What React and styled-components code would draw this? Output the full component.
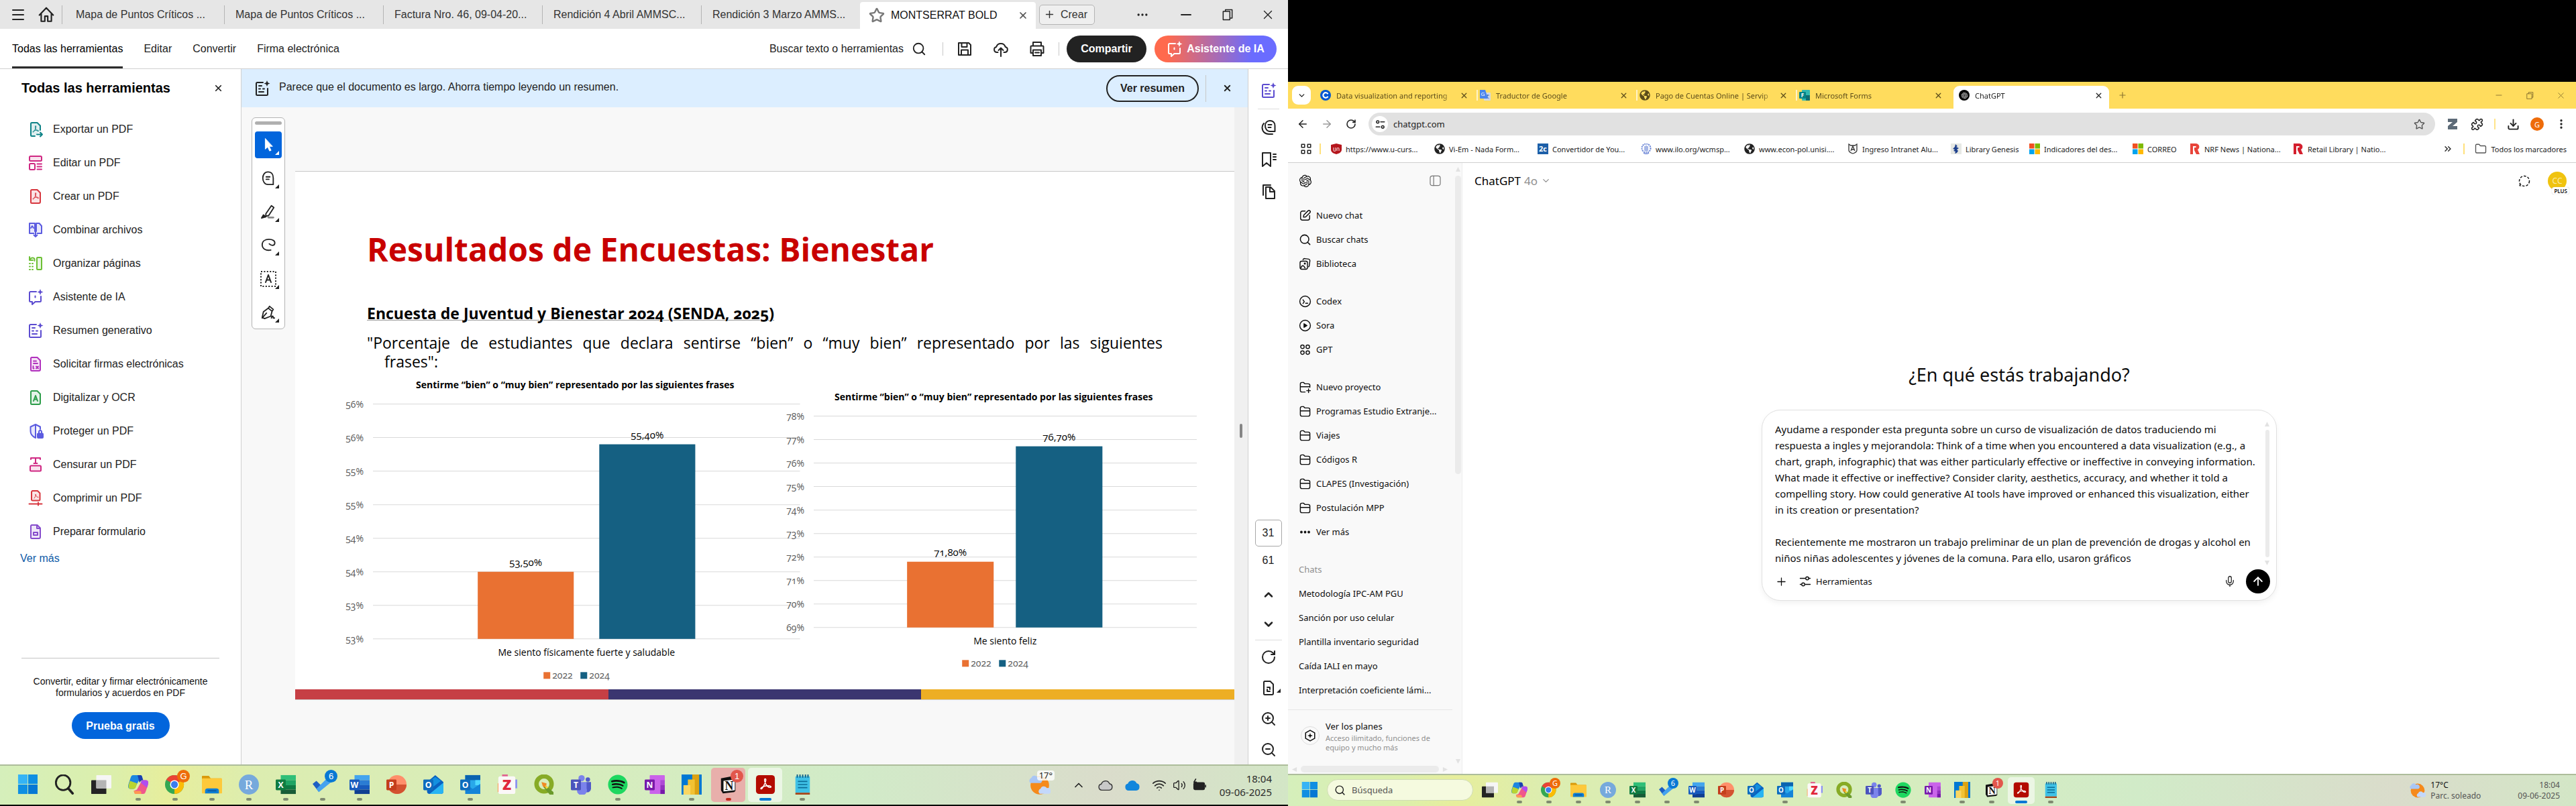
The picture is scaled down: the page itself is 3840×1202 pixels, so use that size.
import React from "react";
import styled, { createGlobalStyle, css } from "styled-components";
import {
  ArrowLeft, ArrowRight, ArrowUp, ChevronDown, ChevronUp, ChevronsRight, Copy, Download,
  Ellipsis, EllipsisVertical, Folder, Menu, Mic, Minus, Plus, Puzzle, RotateCw, Search,
  Star, Volume2, Wifi, X, ZoomIn, ZoomOut,
} from "lucide-react";
import { RiOpenaiFill } from "react-icons/ri";
import { FaSpotify, FaGlobeAmericas } from "react-icons/fa";

/* ---------- base ---------- */

const arial = `"Liberation Sans", Arial, sans-serif`;
const segoe = `"Noto Sans", "Segoe UI", sans-serif`;
const corbel = `"Open Sans", Corbel, sans-serif`;

const GlobalStyle = createGlobalStyle`
  *, *::before, *::after { box-sizing: border-box; }
  body { margin: 0; background: #000; }
  button, input, textarea { font: inherit; color: inherit; margin: 0; padding: 0; border: 0; background: none; outline: 0; }
  a { color: inherit; text-decoration: none; }
  ul { list-style: none; margin: 0; padding: 0; }
  h1, h2, p { margin: 0; font: inherit; }
  svg { display: block; flex: none; }
`;

const Desktop = styled.div`
  display: grid;
  grid-template-columns: 1fr 1fr;
  min-height: 100vh;
`;

const Monitor = styled.section`
  display: flex;
  flex-direction: column;
  min-width: 0;
  padding: ${(p) => p.$inset};
  font-family: ${(p) => p.$font};
`;

const Spacer = styled.div`
  flex: 1;
`;

const Rule = styled.span`
  flex: none;
  width: ${(p) => p.$w || 1}px;
  height: ${(p) => p.$h}px;
  margin: ${(p) => p.$m || "0"};
  background: ${(p) => p.$c || "#c8c8c8"};
`;

const IconButton = styled.button`
  position: relative;
  display: flex;
  align-items: center;
  justify-content: center;
  flex: none;
  width: ${(p) => p.$w || 40}px;
  height: ${(p) => p.$h || p.$w || 40}px;
  border-radius: 4px;
  color: ${(p) => p.$color || "#222"};
  background: ${(p) => p.$bg || "transparent"};
`;

/* ---------- drawn icons ---------- */

const Glyph = ({ size = 24, color = "currentColor", sw = 2, fill = "none", children }) => (
  <svg width={size} height={size} viewBox="0 0 24 24" fill={fill} stroke={color} strokeWidth={sw} strokeLinecap="round" strokeLinejoin="round">
    {children}
  </svg>
);

const trefoil = "M12 7c-.9 0-.8 2 .2 4.200 1 2.200 2.900 3.800 4 3.600 1.200-.4.2-1.700-2.200-1.700-2.300 0-4.300.8-5.500 1.800-1.100 1-.2 1.900.8.6C10.900 13.500 13 8.500 12.700 7.500c-.1-.3-.3-.5-.7-.5z";
const page = "M6 2h8.500L19 6.500V20a2 2 0 0 1-2 2H6.500A1.500 1.500 0 0 1 5 20.500v-17A1.500 1.500 0 0 1 6.500 2z";
const spark = "M19 0l1.300 3.200L23.500 4.500l-3.200 1.300L19 9l-1.300-3.200L14.500 4.500l3.200-1.300z";

const SummaryIcon = ({ size = 24, color }) => (
  <Glyph size={size} color={color}>
    <path d="M13 3H4.500A1.500 1.500 0 0 0 3 4.500v16A1.500 1.500 0 0 0 4.500 22h14a1.500 1.500 0 0 0 1.500-1.500V12M7 8h4M7 12.500h2M13 12.500h2M7 17h7" />
    <path d={spark} fill={color || "currentColor"} stroke="none" />
  </Glyph>
);
const AssistantIcon = ({ size = 24, color }) => (
  <Glyph size={size} color={color}>
    <path d="M13 4H4.500A1.500 1.500 0 0 0 3 5.500v12A1.500 1.500 0 0 0 4.500 19H7v4l4.500-4h7a1.500 1.500 0 0 0 1.500-1.500V11M11.500 10.500v2" />
    <path d={spark} fill={color || "currentColor"} stroke="none" />
  </Glyph>
);
const CommentsIcon = () => (
  <Glyph>
    <path d="M14 2C9.500 2 7 5.500 7 9.500S9.500 18 14 18h7.500V9.500C21.500 5 18.500 2 14 2zM11.500 8h5M11.500 12h4" />
    <path d="M5 6C3 8 2.500 10 2.500 12c0 6 4 10 10 10H18" />
  </Glyph>
);
const HomeIcon = () => (
  <Glyph size={26}><path d="M2.500 12.500L12 2.500l9.500 10M5 10.500V21h5v-7h4v7h5V10.500" /></Glyph>
);
const SaveIcon = () => (
  <Glyph><path d="M3 3h15l3 3v15H3zM7.500 3v6h8V3M7 21v-7.500h10V21" /></Glyph>
);
const UploadIcon = () => (
  <Glyph><path d="M7.500 17H6a4 4 0 0 1-.8-7.900 7 7 0 0 1 13.500 0A4 4 0 0 1 18 17h-1.500M12 23V11M8.500 14l3.500-3.500 3.500 3.500" /></Glyph>
);
const PrintIcon = () => (
  <Glyph><path d="M6 7V2h12v5M6 18H2.500V8.500a1 1 0 0 1 1-1h17a1 1 0 0 1 1 1V18H18M6 13.500h12V22H6zM9 17.500h6" /></Glyph>
);

const toolIcons = {
  exportar: (c) => <Glyph color={c}><path d="M19 13V6.500L14.500 2h-8A1.500 1.500 0 0 0 5 3.500v17A1.500 1.500 0 0 0 6.500 22H11" fill={c + "22"} /><path d={trefoil} strokeWidth="1" /><path d="M14 19.500h8M19 16.500l3 3-3 3" /></Glyph>,
  editar: (c) => <Glyph color={c}><rect x="3" y="2" width="18" height="7" rx="1.500" fill={c + "22"} /><rect x="3" y="13" width="8" height="9" rx="1.500" /><path d="M14.500 13.500H21M14.500 17.500H21M14.500 21.500H21" /></Glyph>,
  crear: (c) => <Glyph color={c}><path d={page} fill={c + "22"} /><path d={trefoil} strokeWidth="1" /></Glyph>,
  combinar: (c) => <Glyph color={c}><path d="M9.500 17H3V2h8v12M14.500 17H21V6l-3.500-4H13v12" fill={c + "22"} /><path d="M12 12v10M9.500 19.500L12 22l2.500-2.500M5 9l2-3 2 3" /></Glyph>,
  organizar: (c) => <Glyph color={c}><rect x="14" y="3" width="7" height="18" rx="1" fill={c + "22"} /><path d="M3 2v5h5M3.500 6C5 3 9 2.500 10.500 5v3" /><path d="M3 12h8M3 16.500h8M3 21h8" strokeDasharray="1 3" /></Glyph>,
  asistente: (c) => <AssistantIcon color={c} />,
  resumen: (c) => <SummaryIcon color={c} />,
  firmas: (c) => <Glyph color={c}><path d={page} fill={c + "22"} /><path d="M9 7.500h4M9 11h6M8.500 15v3M8.500 18.500h1M13 15.500l3 3M16 15.500l-3 3" /></Glyph>,
  ocr: (c) => <Glyph color={c}><path d={page} fill={c + "22"} /><path d="M9 17l3-8 3 8M10 14.500h4" /></Glyph>,
  proteger: (c) => <Glyph color={c}><path d="M19 9V5.500L12 2 4.500 5.500V12c0 5 3 8 7.500 10V2" fill={c + "22"} /><rect x="15" y="15.500" width="8" height="6.500" rx="1" fill={c} /><path d="M17 15v-2a2 2 0 0 1 4 0v2" /></Glyph>,
  censurar: (c) => <Glyph color={c}><path d="M5 4V2h14v2M12 2v8M9.500 10h5" /><rect x="4" y="13.500" width="16" height="8" rx="1.500" fill={c + "22"} /></Glyph>,
  comprimir: (c) => <Glyph color={c}><path d="M7 1h8l3.500 3.500V14a1.500 1.500 0 0 1-1.500 1.500H7.500A1.500 1.500 0 0 1 6 14V2.500z" fill={c + "22"} /><path d="M10 12c1.500-1.500 2.500-4 2-6 .5 3 2 4.500 4 4.500" strokeWidth="1" /><path d="M2.500 20.500h19M16 18.500v4" /></Glyph>,
  formulario: (c) => <Glyph color={c}><path d={page} fill={c + "22"} /><rect x="9" y="13" width="6" height="4" /><path d="M14 3v4h4" /></Glyph>,
};

/* ---------- taskbar icons ---------- */

const App32 = ({ size, children }) => (
  <svg width={size} height={size} viewBox="0 0 32 32">{children}</svg>
);
const Tile = ({ c, t }) => (
  <g>
    <rect x="0" y="8" width="16" height="17" rx="1.500" fill={c} />
    <text x="8" y="21.500" fill="#fff" fontFamily="Open Sans, sans-serif" fontSize="13" fontWeight="700" textAnchor="middle">{t}</text>
  </g>
);
const bars = (a, b, c, d) => (
  <g>
    <rect x="8" y="1" width="24" height="8" fill={a} /><rect x="8" y="9" width="24" height="8" fill={b} />
    <rect x="8" y="17" width="24" height="7" fill={c} /><rect x="8" y="24" width="24" height="7" fill={d} />
  </g>
);
const appIcons = {
  windows: <g fill="#0f8fe2"><rect x="1" y="0" width="15" height="15" fill="#35b4f5" /><rect x="17" y="0" width="15" height="15" /><rect x="1" y="16" width="15" height="15" /><rect x="17" y="16" width="15" height="15" fill="#0678d4" /></g>,
  search: <g fill="none" stroke="#222" strokeWidth="3" strokeLinecap="round"><ellipse cx="14" cy="13" rx="11.500" ry="12" /><path d="M22 22l7 8" strokeWidth="4" /></g>,
  tasks: <g><rect x="0" y="9" width="24" height="22" rx="1" fill="#242424" /><rect x="8" y="1" width="24" height="21" rx="1" fill="#f6f6f6" /><rect x="8" y="9" width="16" height="13" fill="#b4b4b4" /></g>,
  copilot: <g><path d="M8 1h11c3 0 3 2 4 5l-5 2-6 11c-1 3-2 4-4 4H4c-4 0-5-3-3-9L4 5c1-3 2-4 4-4z" fill="#1c86e0" /><path d="M3 10l-2 6c-1 5 0 7 4 7h4c2 0 3-2 4-5l1-4z" fill="#b9d531" /><path d="M24 31H13c-3 0-3-2-4-5l5-2 6-11c1-3 2-4 4-4h4c4 0 5 3 3 9l-3 9c-1 3-2 4-4 4z" fill="#f0588c" /><path d="M20 13c1-3 2-4 4-4h4c4 0 5 3 3 9l-1 3z" fill="#b04df0" /><path d="M13 31c-3 0-3-2-4-5h10c2 0 3 5 1 5z" fill="#ff9a52" /><path d="M15 1h4c3 0 3 2 4 5l1 3c-4 0-4 2-6 4z" fill="#1b3fb0" /></g>,
  chrome: <g><circle cx="15" cy="16" r="15" fill="#34a853" /><path d="M15 16L2 8.500A15 15 0 0 1 28 8.500z" fill="#ea4335" /><path d="M15 16l13-7.500A15 15 0 0 1 15 31z" fill="#fbbc05" /><circle cx="15" cy="16" r="7" fill="#fff" /><circle cx="15" cy="16" r="5.500" fill="#3b7ded" /></g>,
  folder: <g><path d="M0 3a1 1 0 0 1 1-1h10l3 4h17v4H0z" fill="#d99a0b" /><rect x="0" y="6" width="32" height="24" rx="1" fill="#fdc93b" /><path d="M5 30v-4a4 4 0 0 1 4-4h14a4 4 0 0 1 4 4v4z" fill="#0f7fd4" /><path d="M9 26h14" stroke="#0a4f94" strokeWidth="1.500" /></g>,
  r: <g><circle cx="16" cy="16" r="16" fill="#76a9dc" /><text x="16" y="23" fill="#fff" fontFamily="Liberation Serif, serif" fontSize="20" textAnchor="middle">R</text></g>,
  excel: <g>{bars("#2fbf78", "#1fa463", "#0f7a43", "#185c37")}<Tile c="#107c41" t="X" /></g>,
  todo: <g><path d="M0 15l6-5 9 9-5 9z" fill="#1d5fc4" /><path d="M10 28l-4-5L25 4l7 6z" fill="#45a2ee" /></g>,
  word: <g>{bars("#43a5ee", "#2b7cd3", "#185abd", "#103f91")}<Tile c="#185abd" t="W" /></g>,
  ppt: <g><circle cx="17" cy="16" r="15" fill="#ff8f6b" /><path d="M2 16h30a15 15 0 0 1-30 0z" fill="#d35230" /><Tile c="#c43e1c" t="P" /></g>,
  outlookNew: <g><path d="M6 12L19 1l13 11v15a4 4 0 0 1-4 4H10a4 4 0 0 1-4-4z" fill="#0a62c0" /><path d="M6 13l13-9 9 6-18 14z" fill="#1490df" /><path d="M32 13v14a4 4 0 0 1-4 4H10z" fill="#28b4f2" /><Tile c="#0f6cbd" t="O" /></g>,
  outlook: <g><rect x="8" y="1" width="24" height="24" fill="#28a8ea" /><rect x="8" y="1" width="24" height="8" fill="#0a63b0" /><rect x="24" y="9" width="8" height="8" fill="#50d9ff" /><path d="M8 15l12 8 12-8v16H8z" fill="#1484d8" /><Tile c="#0f6cbd" t="O" /></g>,
  zotero: <g><rect x="8" y="0" width="9" height="5" fill="#e0638f" /><rect x="1" y="14" width="8" height="14" fill="#ff9248" /><rect x="24" y="8" width="8" height="14" fill="#8b93f0" /><rect x="2" y="3" width="27" height="28" rx="3" fill="#fbf8f8" /><text x="15.500" y="25" fill="#e0283c" fontFamily="Open Sans, sans-serif" fontSize="23" fontWeight="800" textAnchor="middle">Z</text></g>,
  qgis: <g><circle cx="16" cy="15" r="12" fill="none" stroke="#87ab26" strokeWidth="7" /><path d="M17 16l14 12v4h-6L15 20z" fill="#6b9a2c" /><path d="M12 12l8 2-1 7-5-2z" fill="#f08a24" /><path d="M18 17l5 4-4 2z" fill="#f8dc3c" /></g>,
  teams: <g><circle cx="17" cy="6" r="5" fill="#7b83eb" /><circle cx="27" cy="8" r="3.500" fill="#5059c9" /><path d="M24 12h8v11a6 6 0 0 1-8 5z" fill="#5059c9" /><path d="M9 12h16v10a8 8 0 0 1-15 6z" fill="#7b83eb" /><Tile c="#4b53bc" t="T" /></g>,
  onenote: <g><rect x="8" y="1" width="24" height="30" rx="1" fill="#ca64ea" /><rect x="25" y="9" width="7" height="8" fill="#ae4bd5" /><rect x="25" y="17" width="7" height="7" fill="#9332bf" /><rect x="25" y="24" width="7" height="7" fill="#7719aa" /><Tile c="#7719aa" t="N" /></g>,
  powerbi: <g><rect width="32" height="32" fill="#0078d4" /><rect x="17" y="0" width="11" height="32" fill="#dba212" /><rect x="10" y="8" width="11" height="24" fill="#f2c233" /><rect x="3" y="17" width="11" height="15" fill="#f9d662" /></g>,
  notion: <g><path d="M4 6l17-3 6 4v19l-2 2-18 2-3-5z" fill="#111" /><path d="M8 10l18-2v17l-18 2z" fill="#fff" /><text x="17" y="24" fill="#111" fontFamily="Liberation Serif, serif" fontSize="19" fontWeight="700" textAnchor="middle">N</text></g>,
  acrobat: <g><rect x="1" y="1" width="30" height="30" rx="5" fill="#b30b00" /><path d="M15.500 7c-1.600 0-1 4 .8 7.500 1.800 3.500 5 6.200 7.500 6 2.400-.4.800-2.700-3.500-2.700-4.500 0-8.500 1.300-10.700 3-2 1.800-.6 3.400 1.400 1C13.500 18.700 17.200 10 16.700 8c-.2-.7-.6-1-1.200-1z" fill="none" stroke="#fff" strokeWidth="1.600" /></g>,
  notepad: <g><rect x="5" y="3" width="23" height="26" rx="1" fill="#3fc1e6" /><path d="M8 0v5M12.300 0v5M16.600 0v5M21 0v5M25 0v5" stroke="#0c5d86" strokeWidth="2" /><path d="M9 11h15M9 16h15M9 21h15" stroke="#0c6d98" strokeWidth="1.800" /><rect x="5" y="29" width="23" height="3" fill="#a4461c" /></g>,
};
const SpotifyMark = styled(FaSpotify)`
  color: #1ed760;
  background: radial-gradient(#111 60%, transparent 62%);
`;
const AppIcon = ({ name, size }) =>
  name === "spotify" ? <SpotifyMark size={size} /> : <App32 size={size}>{appIcons[name]}</App32>;

const Bar = styled.footer`
  display: flex;
  align-items: stretch;
  height: ${(p) => (p.$small ? 48 : 60)}px;
  padding: ${(p) => (p.$small ? "0 24px 0 10px" : "0 24px 0 13px")};
  border-top: 2px solid #adbd9b;
  background: linear-gradient(90deg, #d5efbb 0%, #dcefab 9%, #e7ee9c 13%, #dcedb0 20%, #d7edbd 45%, #d1ebc8 66%, #dadccb 86%, #d3e6c6 100%);
`;
const AppCell = styled.button`
  position: relative;
  display: flex;
  flex-direction: column;
  align-items: center;
  flex: none;
  gap: ${(p) => (p.$small ? 4 : 5)}px;
  width: ${(p) => (p.$small ? 40 : 51)}px;
  margin: ${(p) => (p.$small ? "3px 2px" : "3px 2px 4px")};
  padding-top: ${(p) => (p.$small ? 7 : 10)}px;
  border-radius: 5px;
  background: ${(p) => p.$bg || "transparent"};
`;
const Running = styled.span`
  width: ${(p) => (p.$wide ? 18 : 8)}px;
  height: 4px;
  border-radius: 2px;
  background: ${(p) => p.$c};
`;
const Badge = styled.span`
  position: absolute;
  top: ${(p) => (p.$small ? 1 : 3)}px;
  right: 3px;
  width: ${(p) => (p.$small ? 16 : 19)}px;
  height: ${(p) => (p.$small ? 16 : 19)}px;
  border-radius: 50%;
  background: ${(p) => p.$c};
  color: #fff;
  font-size: ${(p) => (p.$small ? 11 : 13)}px;
  line-height: ${(p) => (p.$small ? 16 : 19)}px;
  text-align: center;
`;

const apps = [
  { id: "windows" }, { id: "search" }, { id: "tasks" }, { id: "copilot", on: 1 },
  { id: "chrome", on: 1, badge: "G", bc: "#ee6c0a" }, { id: "folder", on: 1 }, { id: "r", on: 1 },
  { id: "excel", on: 1 }, { id: "todo", on: 1, badge: "6", bc: "#0878d4" }, { id: "word", on: 1 },
  { id: "ppt" }, { id: "outlookNew" }, { id: "outlook", on: 1 }, { id: "zotero" }, { id: "qgis" },
  { id: "teams" }, { id: "spotify", on: 1 }, { id: "onenote" }, { id: "powerbi", on: 1 },
  { id: "notion", on: 1, badge: "1", bc: "#e2574c", alert: 1 }, { id: "acrobat", on: 1, active: 1 }, { id: "notepad", on: 1 },
];
const TaskApp = ({ app, small }) => {
  const alert = app.alert && !small;
  return (
    <AppCell $small={small} aria-label={app.id} $bg={app.active ? "rgba(255,255,255,.55)" : alert ? "#e8afab" : null}>
      <AppIcon name={app.id} size={small ? 24 : 30} />
      {app.on ? <Running $wide={app.active} $c={app.active ? "#0078d4" : alert ? "#c42b1c" : "#7f8a70"} /> : null}
      {app.badge ? <Badge $small={small} $c={app.bc}>{app.badge}</Badge> : null}
    </AppCell>
  );
};

const Tray = styled.div`
  display: flex;
  align-items: center;
  font-family: ${segoe};
`;
const TrayCell = styled.div`
  position: relative;
  display: flex;
  justify-content: center;
  width: ${(p) => p.$w}px;
  color: #222;
`;
const Temp = styled.span`
  position: absolute;
  top: -6px;
  left: 16px;
  padding: 0 3px;
  border-radius: 4px;
  background: rgba(255, 255, 255, 0.8);
  font-size: 13px;
  line-height: 15px;
`;
const Clock = styled.div`
  margin-left: 15px;
  font-size: ${(p) => p.$s}px;
  line-height: ${(p) => p.$lh}px;
  text-align: right;
  color: ${(p) => p.$c || "#2c2c2c"};
`;
const Weather = styled.div`
  margin-left: 7px;
  font-size: 12px;
  line-height: 16px;
  color: #111;
  span { display: block; color: #555; }
`;
const WeatherIcon = ({ size }) => (
  <svg width={size} height={size} viewBox="0 0 30 30">
    <circle cx="15" cy="15" r="13" fill="#f58a1c" />
    <path d="M2 12a4 4 0 0 1 1-7 5 5 0 0 1 9-1 4 4 0 0 1 4 8z" fill="#a9c6f5" />
    <path d="M15 27a4 4 0 0 1 1-7 5 5 0 0 1 9-1 4 4 0 0 1 3 8z" fill="#c3d8fb" />
  </svg>
);
const CloudGlyph = ({ c, s }) => (
  <svg width="22" height="22" viewBox="0 0 24 24"><path d="M6 20a5 5 0 0 1-.8-9.900 7 7 0 0 1 13.200-.6A5.300 5.300 0 0 1 18 20z" fill={c} stroke={s} strokeWidth="1.500" /></svg>
);
const BatteryGlyph = () => (
  <Glyph size={22} sw={1.800}><rect x="3" y="8" width="17" height="11" rx="2" fill="#222" /><path d="M22 12v3" /><path d="M6 2L3 7h4l-2 5" stroke="#222" /></Glyph>
);

/* ---------- Acrobat ---------- */

const TabStrip = styled.nav`
  display: flex;
  align-items: center;
  height: 43px;
  padding-left: 8px;
  background: #e6e6e6;
  font-size: 16px;
  color: #333;
`;
const DocTab = styled.button`
  flex: none;
  width: ${(p) => (p.$first ? 242 : 237)}px;
  height: 28px;
  padding-left: ${(p) => (p.$first ? 20 : 16)}px;
  border-left: 1px solid #b4b4b4;
  text-align: left;
  white-space: nowrap;
`;
const ActiveTab = styled.div`
  display: flex;
  align-items: center;
  align-self: flex-end;
  gap: 9px;
  width: 262px;
  height: 40px;
  padding: 0 9px 0 13px;
  border-radius: 4px 4px 0 0;
  background: #fff;
  color: #111;
`;
const CreateButton = styled.button`
  display: flex;
  align-items: center;
  justify-content: center;
  gap: 8px;
  width: 83px;
  height: 30px;
  margin-left: 5px;
  padding-right: 4px;
  border: 1px solid #b4b4b4;
  border-radius: 5px;
  background: #efefef;
`;
const Toolbar = styled.header`
  display: flex;
  align-items: center;
  height: 60px;
  padding: 0 17px 0 18px;
  border-bottom: 1px solid #d0d0d0;
  background: #fff;
  font-size: 16px;
  color: #222;
`;
const MenuLink = styled.button`
  height: 59px;
  margin-right: 31px;
  border-top: 3px solid transparent;
  border-bottom: 3px solid ${(p) => (p.$on ? "#2c2c2c" : "transparent")};
  color: ${(p) => (p.$on ? "#000" : "#222")};
`;
const FindButton = styled.button`
  display: flex;
  align-items: center;
  gap: 12px;
`;
const Pill = styled.button`
  display: flex;
  align-items: center;
  justify-content: center;
  gap: 6px;
  width: ${(p) => p.$w}px;
  height: 40px;
  border-radius: 20px;
  border: ${(p) => p.$border || "0"};
  background: ${(p) => p.$bg || "transparent"};
  color: ${(p) => p.$c || "#fff"};
  font-weight: 700;
  font-size: 16px;
  white-space: nowrap;
`;
const Workspace = styled.div`
  display: flex;
  flex: 1;
  background: #fff;
`;
const ToolPane = styled.aside`
  display: flex;
  flex-direction: column;
  flex: none;
  width: 360px;
  padding: 13px 32px 38px;
  border-right: 1px solid #d0d0d0;
  font-size: 16px;
  color: #222;
`;
const PaneHead = styled.div`
  display: flex;
  align-items: center;
  justify-content: space-between;
  height: 30px;
  margin: 0 -6px 22px 0;
  font-size: 20px;
  font-weight: 700;
  color: #000;
`;
const ToolLink = styled.a`
  display: flex;
  align-items: center;
  gap: 14px;
  height: 50px;
  padding-left: 9px;
`;
const MoreLink = styled.a`
  margin: 5px 0 0 -2px;
  line-height: 20px;
  color: #0d5aa7;
`;
const Promo = styled.div`
  display: flex;
  flex-direction: column;
  align-items: center;
  gap: 20px;
  margin-top: auto;
  padding-top: 26px;
  border-top: 1px solid #c4c4c4;
  font-size: 14px;
  line-height: 17px;
  text-align: center;
  white-space: nowrap;
  color: #111;
`;
const Viewer = styled.div`
  display: flex;
  flex-direction: column;
  flex: 1;
  min-width: 0;
`;
const Notice = styled.div`
  display: flex;
  align-items: center;
  height: 57px;
  padding: 0 17px 0 19px;
  background: #dceeff;
  font-size: 16px;
  color: #222;
`;
const NoticeText = styled.span`
  margin-left: 13px;
  padding-bottom: 4px;
`;
const Canvas = styled.div`
  display: flex;
  flex: 1;
  background: #f8f8f8;
`;
const FloatColumn = styled.div`
  flex: none;
  width: 80px;
  padding: 15px;
`;
const FloatBar = styled.div`
  display: flex;
  flex-direction: column;
  align-items: center;
  gap: 10px;
  padding: 5px 0 4px;
  border: 1px solid #b4b4b4;
  border-radius: 6px;
  background: #fff;
`;
const Grip = styled.span`
  width: 40px;
  height: 5px;
  border-radius: 3px;
  background: #b0b0b0;
`;
const Corner = styled.span`
  position: absolute;
  right: 4px;
  bottom: 5px;
  border: 3px solid transparent;
  border-right-color: ${(p) => p.$c || "#222"};
  border-bottom-color: ${(p) => p.$c || "#222"};
`;
const ScrollTrack = styled.div`
  flex: none;
  width: 20px;
  padding: 472px 8px 0;
  background: #f0f0f0;
`;
const ScrollThumb = styled.div`
  height: 21px;
  border-radius: 2px;
  background: #858585;
`;
const Slide = styled.article`
  flex: 1;
  align-self: flex-start;
  min-width: 0;
  margin-top: 95px;
  padding-top: 84px;
  border-top: 1px solid #c8c8c8;
  border-bottom: 1px solid #d0d0d0;
  background: #fff;
  font-family: ${corbel};
  font-variant-numeric: oldstyle-nums;
  color: #000;
`;
const SlideText = styled.div`
  padding: 0 107px;
`;
const SlideTitle = styled.h1`
  font-size: 48px;
  font-weight: 700;
  line-height: 64px;
  color: #c80000;
`;
const SlideHeading = styled.h2`
  margin: 49px 0 16px;
  font-size: 23px;
  font-weight: 700;
  line-height: 28px;
  text-decoration: underline #999 1px;
  text-underline-offset: 1px;
`;
const SlideLine = styled.p`
  padding-left: ${(p) => (p.$hang ? 26 : 0)}px;
  font-size: 23px;
  line-height: 28px;
  text-align-last: ${(p) => (p.$hang ? "left" : "justify")};
`;
const Charts = styled.div`
  display: flex;
  align-items: flex-start;
  padding: 4px 56px 3px 64px;
`;
const ChartBox = styled.figure`
  flex: ${(p) => p.$grow} 1 0;
  min-width: 0;
  margin: 0 0 0 ${(p) => (p.$overlap ? -32 : 0)}px;
  svg { width: 100%; height: auto; }
`;
const Stripes = styled.div`
  height: 15px;
  background: linear-gradient(90deg, #c63f45 0 33.33%, #3b3670 33.33% 66.66%, #edae24 66.66%);
`;

const Chart = ({ width, ticks, top, step, cx, titleX, titleY, bars: data, catY, category, legendX, legendY }) => {
  const bottom = top + step * (ticks.length - 1);
  return (
    <svg viewBox={`0 0 ${width} 468`} fontFamily="Open Sans, sans-serif" fontSize="14" role="img">
      <text x={titleX} y={titleY} fontWeight="700" textAnchor="middle">Sentirme “bien” o “muy bien” representado por las siguientes frases</text>
      {ticks.map((t, i) => (
        <g key={i}>
          <line x1="52" x2={width} y1={top + i * step} y2={top + i * step} stroke="#d9d9d9" strokeWidth="1" />
          <text x="38" y={top + i * step + 5} fill="#595959" textAnchor="end">{t}</text>
        </g>
      ))}
      {data.map((b) => (
        <g key={b.label}>
          <rect x={b.x} y={bottom - b.h} width={b.w} height={b.h} fill={b.fill} />
          <text x={b.x + b.w / 2} y={bottom - b.h - 9} textAnchor="middle" fontSize="15">{b.label}</text>
        </g>
      ))}
      <text x={cx} y={catY} textAnchor="middle">{category}</text>
      <rect x={legendX} y={legendY - 10} width="10" height="10" fill="#e97132" />
      <text x={legendX + 13} y={legendY} fill="#595959">2022</text>
      <rect x={legendX + 55} y={legendY - 10} width="10" height="10" fill="#156082" />
      <text x={legendX + 68} y={legendY} fill="#595959">2024</text>
    </svg>
  );
};

const Rail = styled.aside`
  display: flex;
  flex-direction: column;
  align-items: center;
  flex: none;
  width: 60px;
  padding: 20px 0 10px;
  border-left: 1px solid #d0d0d0;
  background: #fff;
  font-size: 16px;
  color: #222;
`;
const RailGroup = styled.div`
  position: relative;
  display: flex;
  flex-direction: column;
  align-items: center;
  gap: ${(p) => p.$gap}px;
  margin-top: ${(p) => p.$mt || 0};
`;
const PageInput = styled.input`
  width: 40px;
  height: 40px;
  border: 1px solid #a8a8a8;
  border-radius: 5px;
  text-align: center;
`;

const tools = [
  ["Exportar un PDF", "exportar", "#0f8387"], ["Editar un PDF", "editar", "#cf2782"], ["Crear un PDF", "crear", "#d7373f"],
  ["Combinar archivos", "combinar", "#5c5ce0"], ["Organizar páginas", "organizar", "#6cbf35"], ["Asistente de IA", "asistente", "#5b4bd0"],
  ["Resumen generativo", "resumen", "#5b4bd0"], ["Solicitar firmas electrónicas", "firmas", "#b130bd"], ["Digitalizar y OCR", "ocr", "#2d9d4a"],
  ["Proteger un PDF", "proteger", "#5c5ce0"], ["Censurar un PDF", "censurar", "#cf2782"], ["Comprimir un PDF", "comprimir", "#d7373f"],
  ["Preparar formulario", "formulario", "#864ccc"],
];
const docTabs = ["Mapa de Puntos Críticos ...", "Mapa de Puntos Críticos ...", "Factura Nro. 46, 09-04-20...", "Rendición 4 Abril AMMSC...", "Rendición 3 Marzo AMMS..."];

const floatTools = [
  <Glyph key="c" size={22}><path d="M11.500 1.500C6 1.500 3 6 3 11.500S6 22 11.500 22H20V11.500c0-6-3-10-8.500-10zM8.500 9.500h6M8.500 13.500h4.500" /></Glyph>,
  <Glyph key="h" size={22}><path d="M8 15L17 2l4 3-8.500 13-4.500 1z" /><path d="M1 22l3-5 4 3z" fill="#222" /><path d="M12 21h8" stroke="#888" strokeWidth="3" /></Glyph>,
  <Glyph key="l" size={22}><path d="M16 19.500C8 21 2 17.500 2 11 2 5 7 2 13 2s10 2.500 9.500 6.500S17 13 13.500 9.500" /></Glyph>,
  <Glyph key="t" size={24}><rect x="1" y="1" width="22" height="22" strokeDasharray="2 2.400" strokeLinecap="butt" /><path d="M8 17l4-11 4 11M9.500 13.500h5" /></Glyph>,
  <Glyph key="p" size={22}><path d="M2 20L4 11l8-6 6 5-2 8-10 4zM12 5l2-3 6 5-2 3M2 21l7-8M17 21c1-4 3-4 3 0h2" /></Glyph>,
];

function Acrobat() {
  return (
    <Monitor $font={arial} $inset="0 0 2px">
      <TabStrip>
        <IconButton $w={38} $h={30} aria-label="Menú"><Menu size={24} strokeWidth={2} /></IconButton>
        <IconButton $w={46} $h={30} aria-label="Inicio"><HomeIcon /></IconButton>
        {docTabs.map((t, i) => <DocTab key={i} $first={i === 0}>{t}</DocTab>)}
        <ActiveTab>
          <Star size={24} color="#777" strokeWidth={2.400} />
          <span>MONTSERRAT BOLD</span>
          <Spacer />
          <IconButton $w={20} aria-label="Cerrar" $color="#555"><X size={16} strokeWidth={2.500} /></IconButton>
        </ActiveTab>
        <CreateButton><Plus size={17} />Crear</CreateButton>
        <Spacer />
        <IconButton $w={66} $h={30} aria-label="Más"><Ellipsis size={20} /></IconButton>
        <IconButton $w={64} $h={30} aria-label="Minimizar"><Minus size={24} /></IconButton>
        <IconButton $w={60} $h={30} aria-label="Restaurar"><Glyph size={20} sw={1.800}><path d="M4 6h12v15H4zM8 6V3h12v15h-4" /></Glyph></IconButton>
        <IconButton $w={60} $h={30} aria-label="Cerrar ventana"><X size={22} strokeWidth={1.500} /></IconButton>
      </TabStrip>
      <Toolbar>
        <MenuLink $on>Todas las herramientas</MenuLink>
        <MenuLink>Editar</MenuLink>
        <MenuLink>Convertir</MenuLink>
        <MenuLink>Firma electrónica</MenuLink>
        <Spacer />
        <FindButton>Buscar texto o herramientas<Search size={22} /></FindButton>
        <Rule $h={20} $m="0 5px 0 24px" />
        <IconButton $w={54} aria-label="Guardar"><SaveIcon /></IconButton>
        <IconButton $w={54} aria-label="Subir"><UploadIcon /></IconButton>
        <IconButton $w={54} aria-label="Imprimir"><PrintIcon /></IconButton>
        <Rule $h={20} $m="0 11px 0 5px" />
        <Pill $w={119} $bg="#222">Compartir</Pill>
        <Rule $w={12} $h={1} $c="transparent" />
        <Pill $w={182} $bg="linear-gradient(90deg,#ff6a4d 10%,#6a6cff 80%)"><AssistantIcon />Asistente de IA</Pill>
      </Toolbar>
      <Workspace>
        <ToolPane>
          <PaneHead>Todas las herramientas
            <IconButton $w={16} aria-label="Cerrar panel"><X size={15} strokeWidth={2.800} /></IconButton>
          </PaneHead>
          <ul>
            {tools.map(([label, icon, color]) => (
              <li key={label}><ToolLink href="#">{toolIcons[icon](color)}{label}</ToolLink></li>
            ))}
          </ul>
          <MoreLink href="#">Ver más</MoreLink>
          <Promo>
            <span>Convertir, editar y firmar electrónicamente<br />formularios y acuerdos en PDF</span>
            <Pill $w={146} $bg="#0265dc">Prueba gratis</Pill>
          </Promo>
        </ToolPane>
        <Viewer>
          <Notice>
            <SummaryIcon />
            <NoticeText>Parece que el documento es largo. Ahorra tiempo leyendo un resumen.</NoticeText>
            <Spacer />
            <Pill $w={138} $c="#222" $border="2px solid #222">Ver resumen</Pill>
            <Rule $h={40} $m="0 17px 0 10px" />
            <IconButton $w={28} aria-label="Descartar"><X size={15} strokeWidth={3} /></IconButton>
          </Notice>
          <Canvas>
            <FloatColumn>
              <FloatBar>
                <Grip />
                <IconButton $bg="#0265dc" $color="#fff" aria-label="Seleccionar">
                  <Glyph size={22} fill="#fff" sw={1}><path d="M7 2v17l4-3.500 3 6.500 2.500-1-3-6.500h5z" /></Glyph>
                  <Corner $c="#fff" />
                </IconButton>
                {floatTools.map((t) => <IconButton key={t.key} aria-label={`Herramienta ${t.key}`}>{t}<Corner /></IconButton>)}
              </FloatBar>
            </FloatColumn>
            <Slide>
              <SlideText>
                <SlideTitle>Resultados de Encuestas: Bienestar</SlideTitle>
                <SlideHeading>Encuesta de Juventud y Bienestar 2024 (SENDA, 2025)</SlideHeading>
                <SlideLine>"Porcentaje de estudiantes que declara sentirse “bien” o “muy bien” representado por las siguientes</SlideLine>
                <SlideLine $hang>frases":</SlideLine>
              </SlideText>
              <Charts>
                <ChartBox $grow={688}>
                  <Chart width={688} ticks={["56%", "56%", "55%", "55%", "54%", "54%", "53%", "53%"]} top={45.5} step={50}
                    titleX={353} titleY={22} cx={370} catY={421} category="Me siento físicamente fuerte y saludable" legendX={306} legendY={455}
                    bars={[{ x: 208, w: 143, h: 100, fill: "#e97132", label: "53,50%" }, { x: 389, w: 143, h: 290, fill: "#156082", label: "55,40%" }]} />
                </ChartBox>
                <ChartBox $grow={623} $overlap>
                  <Chart width={623} ticks={["78%", "77%", "76%", "75%", "74%", "73%", "72%", "71%", "70%", "69%"]} top={63.5} step={35}
                    titleX={320} titleY={40} cx={337} catY={404} category="Me siento feliz" legendX={273} legendY={437}
                    bars={[{ x: 191, w: 129, h: 98, fill: "#e97132", label: "71,80%" }, { x: 353, w: 129, h: 270, fill: "#156082", label: "76,70%" }]} />
                </ChartBox>
              </Charts>
              <Stripes />
            </Slide>
            <ScrollTrack><ScrollThumb /></ScrollTrack>
          </Canvas>
        </Viewer>
        <Rail>
          <SummaryIcon color="#5b4bd0" />
          <Rule $w={32} $h={1} $m="15px 0" $c="#ddd" />
          <RailGroup $gap={24}>
            <CommentsIcon />
            <Glyph><path d="M3 2h12v20l-6-5-6 5zM19 4h4M19 8h4M19 12h4" /></Glyph>
            <Glyph><path d="M8 5h7l6 6v11H8zM14 5v7h6M15 2H4v15" /></Glyph>
          </RailGroup>
          <RailGroup $gap={12} $mt="auto">
            <PageInput defaultValue="31" aria-label="Página" />
            <span>61</span>
          </RailGroup>
          <RailGroup $gap={24} $mt="32px">
            <ChevronUp size={20} strokeWidth={3} />
            <ChevronDown size={20} strokeWidth={3} />
          </RailGroup>
          <Rule $w={40} $h={1} $m="13px 0" $c="#ddd" />
          <RailGroup $gap={22}>
            <RotateCw size={24} />
            <IconButton $w={44} $h={24} aria-label="Ajuste de página"><Glyph><path d={page} /><path d="M10 11h4v3M14 17h-4v-3" /></Glyph><Corner /></IconButton>
            <ZoomIn size={24} />
            <ZoomOut size={24} />
          </RailGroup>
        </Rail>
      </Workspace>
      <Bar>
        {apps.map((a) => <TaskApp key={a.id} app={a} />)}
        <Spacer />
        <Tray>
          <TrayCell $w={40}><WeatherIcon size={32} /><Temp>17°</Temp></TrayCell>
          <Rule $w={18} $h={1} $c="transparent" />
          <TrayCell $w={40}><ChevronUp size={20} /></TrayCell>
          <TrayCell $w={40}><CloudGlyph c="#c9c9c9" s="#333" /></TrayCell>
          <TrayCell $w={40}><CloudGlyph c="#1286dc" s="#1286dc" /></TrayCell>
          <Rule $w={5} $h={1} $c="transparent" />
          <TrayCell $w={30}><Wifi size={22} strokeWidth={1.800} /></TrayCell>
          <TrayCell $w={30}><Volume2 size={20} strokeWidth={1.600} /></TrayCell>
          <TrayCell $w={30}><BatteryGlyph /></TrayCell>
          <Clock $s={15} $lh={20}>18:04<br />09-06-2025</Clock>
        </Tray>
      </Bar>
    </Monitor>
  );
}

/* ---------- Chrome ---------- */

const ChromeTabs = styled.nav`
  display: flex;
  align-items: flex-end;
  height: 40px;
  padding-left: 6px;
  background: #ffdc5d;
  font-size: 11px;
  color: #5b4c1a;
`;
const TabSearch = styled.button`
  display: flex;
  align-items: center;
  justify-content: center;
  width: 28px;
  height: 28px;
  margin: 0 14px 6px 0;
  border-radius: 9px;
  background: #fff;
  color: #222;
`;
const BrowserTab = styled.div`
  display: flex;
  align-items: center;
  gap: 8px;
  flex: none;
  height: ${(p) => (p.$active ? 34 : 40)}px;
  ${(p) => p.$active
    ? css`width: 232px; padding: 0 9px 6px 8px; border-radius: 9px 9px 0 0; background: #fff; color: #222;`
    : p.$last ? css`width: 230px; padding-right: 16px;` : css`width: 238px; padding-right: 11px;`}
`;
const TabLabel = styled.span`
  flex: 1;
  min-width: 0;
  overflow: hidden;
  white-space: nowrap;
  mask-image: linear-gradient(90deg, #000 90%, transparent);
`;
const WindowButtons = styled.div`
  display: flex;
  align-self: center;
  color: #8a7431;
`;
const AddressBar = styled.div`
  display: flex;
  align-items: center;
  height: 46px;
  padding: 0 4px;
  background: #fff;
`;
const Omnibox = styled.label`
  display: flex;
  align-items: center;
  flex: 1;
  gap: 8px;
  height: 34px;
  margin: 0 8px;
  padding: 0 4px 0 5px;
  border-radius: 17px;
  background: #e1e1e1;
  font-size: 13px;
  color: #222;
`;
const SiteInfo = styled.span`
  display: flex;
  align-items: center;
  justify-content: center;
  width: 24px;
  height: 24px;
  border-radius: 50%;
  background: #fff;
`;
const Url = styled.input`
  flex: 1;
`;
const Round = styled.span`
  display: flex;
  align-items: center;
  justify-content: center;
  flex: none;
  width: ${(p) => p.$d}px;
  height: ${(p) => p.$d}px;
  border-radius: 50%;
  background: ${(p) => p.$bg};
  color: #fff;
  font-size: 11px;
`;
const Bookmarks = styled.div`
  display: flex;
  align-items: center;
  height: 35px;
  padding: 0 14px 6px 18px;
  border-bottom: 1px solid #cfcfcf;
  background: #fff;
  font-size: 11px;
  color: #222;
`;
const Bookmark = styled.a`
  display: flex;
  align-items: center;
  gap: 6px;
  flex: none;
  width: ${(p) => p.$w}px;
  white-space: nowrap;
`;
const Page = styled.div`
  display: flex;
  flex: 1;
  background: #fff;
`;
const Side = styled.aside`
  display: grid;
  grid-template-columns: 1fr 14px;
  grid-template-rows: 1fr 14px;
  flex: none;
  width: 260px;
  border-right: 1px solid #ececec;
  background: #f9f9f9;
  font-size: 13px;
  color: #0d0d0d;
`;
const SideBody = styled.div`
  display: flex;
  flex-direction: column;
  min-width: 0;
`;
const SideHead = styled.div`
  display: flex;
  align-items: center;
  justify-content: space-between;
  height: 53px;
  padding: 0 16px 0 15px;
`;
const NavGroup = styled.ul`
  margin: ${(p) => p.$mt}px 0 0;
`;
const NavLink = styled.a`
  display: flex;
  align-items: center;
  gap: 7px;
  height: 36px;
  padding-left: 16px;
  white-space: nowrap;
  color: ${(p) => (p.$muted ? "#8f8f8f" : "inherit")};
`;
const Plans = styled.a`
  display: flex;
  align-items: center;
  gap: 9px;
  margin-top: 11px;
  padding: 13px 0 0 19px;
  border-top: 1px solid #e6e6e6;
  white-space: nowrap;
`;
const PlansIcon = styled.span`
  display: flex;
  align-items: center;
  justify-content: center;
  width: 28px;
  height: 28px;
  border: 1px solid #dedede;
  border-radius: 50%;
`;
const PlansText = styled.span`
  line-height: 22px;
  small { display: block; font-size: 11px; line-height: 14px; color: #8f8f8f; }
`;
const SideScroll = styled.div`
  display: flex;
  flex-direction: ${(p) => (p.$row ? "row" : "column")};
  align-items: center;
  justify-content: flex-start;
  gap: 5px;
  padding: ${(p) => (p.$row ? "0 0 0 5px" : "5px 0 0 2px")};
`;
const Thumb = styled.div`
  width: ${(p) => p.$w};
  height: ${(p) => p.$h};
  border-radius: 5px;
  background: #ebebeb;
`;
const Arrow = ({ d }) => (
  <svg width="9" height="9" viewBox="0 0 10 10"><path fill="#e2e2e2" d={{ up: "M5 1l4 8H1z", down: "M5 9l4-8H1z", left: "M1 5l8-4v8z", right: "M9 5L1 1v8z" }[d]} /></svg>
);
const Main = styled.main`
  display: flex;
  flex-direction: column;
  flex: 1;
`;
const MainHead = styled.header`
  display: flex;
  align-items: center;
  height: 53px;
  padding: 0 14px 0 18px;
  font-size: 17px;
`;
const ModelButton = styled.button`
  display: flex;
  align-items: center;
  gap: 5px;
  span { color: #8f8f8f; }
`;
const Avatar = styled.span`
  position: relative;
  display: flex;
  align-items: center;
  justify-content: center;
  width: 28px;
  height: 28px;
  margin-left: 17px;
  border-radius: 50%;
  background: #f0c30f;
  color: #fbeaa8;
  font-size: 12px;
`;
const PlanTag = styled.span`
  position: absolute;
  right: -4px;
  bottom: -6px;
  padding: 0 3px;
  border-radius: 4px;
  background: #fff;
  box-shadow: 0 0 1px #aaa;
  color: #111;
  font-size: 8px;
  line-height: 11px;
  font-weight: 600;
`;
const Hero = styled.div`
  display: flex;
  flex-direction: column;
  align-items: center;
  justify-content: center;
  flex: 1;
  gap: 32px;
  padding-bottom: 15px;
`;
const Question = styled.h1`
  font-size: 27px;
  line-height: 40px;
  color: #0d0d0d;
`;
const Composer = styled.form`
  width: 768px;
  padding: 16px 9px 10px 19px;
  border: 1px solid #e0e0e0;
  border-radius: 28px;
  background: #fff;
  box-shadow: 0 4px 8px rgba(0, 0, 0, 0.05);
  color: #0d0d0d;
`;
const Draft = styled.div`
  display: flex;
  justify-content: space-between;
  height: 216px;
  overflow: hidden;
`;
const DraftText = styled.textarea`
  width: 722px;
  height: 220px;
  overflow: hidden;
  resize: none;
  font-size: 15px;
  line-height: 24px;
`;
const DraftScroll = styled.div`
  display: flex;
  flex-direction: column;
  align-items: center;
  gap: 4px;
`;
const Actions = styled.div`
  display: flex;
  align-items: center;
  height: 36px;
  margin-top: 5px;
  font-size: 13px;
`;
const ToolsButton = styled.button`
  display: flex;
  align-items: center;
  gap: 7px;
  margin-left: 17px;
`;
const SearchPill = styled.label`
  display: flex;
  align-items: center;
  gap: 9px;
  width: 218px;
  height: 32px;
  margin: 6px 3px 0 4px;
  padding-left: 10px;
  border: 1px solid #cfdcb4;
  border-radius: 16px;
  background: #f5fadf;
  font-size: 13px;
  color: #222;
  input { width: 160px; }
  input::placeholder { color: #555; opacity: 1; }
`;

const Ms = () => <svg width="16" height="16" viewBox="0 0 16 16"><path fill="#f25022" d="M0 0h7.500v7.500H0z" /><path fill="#7fba00" d="M8.500 0H16v7.500H8.500z" /><path fill="#00a4ef" d="M0 8.500h7.500V16H0z" /><path fill="#ffb900" d="M8.500 8.500H16V16H8.500z" /></svg>;
const Sq = ({ bg, t }) => (
  <svg width="16" height="16" viewBox="0 0 16 16"><rect width="16" height="16" fill={bg} /><text x="8" y="12" textAnchor="middle" fill="#fff" fontSize="11" fontWeight="700" fontFamily="Open Sans, sans-serif">{t}</text></svg>
);
const RMark = ({ c }) => <svg width="16" height="16" viewBox="0 0 16 16"><path fill={c} d="M1 0h8c6 0 7 7 3 9l3 7h-5l-3-6V6h2c1 0 1-2 0-2H5v12H1z" /></svg>;
const Shield = () => <svg width="16" height="16" viewBox="0 0 16 16"><path fill="#b5161d" d="M0 2l8-2 8 2v7c0 4-4 6-8 7-4-1-8-3-8-7z" /><path d="M4 6v4c0 2 3 2 3 0V6M9 11V8c0-2 3-2 3 0v3" fill="none" stroke="#f2c9c9" strokeWidth="1.200" /></svg>;
const Ilo = () => <svg width="16" height="16" viewBox="0 0 16 16" fill="none" stroke="#6b86d6"><circle cx="8" cy="7" r="6.500" strokeDasharray="2 1" strokeWidth="2" /><path d="M6 4v7M8 3v9M10 4v7M4 14c2 2 6 2 8 0" strokeWidth="1.200" /></svg>;
const Crest = () => <svg width="16" height="16" viewBox="0 0 16 16" fill="none" stroke="#333" strokeWidth="1.300"><path d="M2 1v9c0 3 3 4 6 5 3-1 6-2 6-5V1l-3 2H5z" /><path d="M5 11l3-7 3 7M6 9h4" /></svg>;
const LibGen = () => <svg width="16" height="16" viewBox="0 0 16 16"><rect width="16" height="16" fill="#e6e8e4" /><path d="M7 1l3 3-2 1 4 2-3 2 2 2-2 3-3 1 1-3-3-1 2-2-3-1 3-3z" fill="#1d3f8c" /></svg>;
const Translate = () => <svg width="16" height="16" viewBox="0 0 16 16"><rect x="6" y="4" width="10" height="12" rx="1" fill="#cfd8e6" /><path d="M9 8h5M11.500 7v1c0 2-1 4-2.500 5M10 10l3.500 3" stroke="#3b6fc4" fill="none" /><path d="M0 0h8l4 13H1a1 1 0 0 1-1-1z" fill="#4a86ee" /><text x="4.500" y="9" fontSize="8" fill="#fff" textAnchor="middle" fontFamily="Open Sans, sans-serif">G</text></svg>;
const Coursera = () => <svg width="16" height="16" viewBox="0 0 16 16"><circle cx="8" cy="8" r="8" fill="#0056d2" /><path d="M11.500 6.200a3.800 3.800 0 1 0 0 3.600" fill="none" stroke="#fff" strokeWidth="2.200" /></svg>;
const Forms = () => <svg width="16" height="16" viewBox="0 0 16 16"><rect x="4" width="12" height="16" rx="1" fill="#31b7b0" /><path d="M10 8h6v7a1 1 0 0 1-1 1h-5z" fill="#0f6e73" /><rect y="3" width="10" height="10" rx="1" fill="#038387" /><text x="5" y="11" fontSize="8" fontWeight="700" fill="#fff" textAnchor="middle" fontFamily="Open Sans, sans-serif">F</text></svg>;
const Globe = () => <FaGlobeAmericas size={16} color="currentColor" />;

const browserTabs = [
  ["Data visualization and reporting", <Coursera key="i" />], ["Traductor de Google", <Translate key="i" />],
  ["Pago de Cuentas Online | Servip", <Globe key="i" />], ["Microsoft Forms", <Forms key="i" />],
];
const bookmarks = [
  ["https://www.u-curs...", <Shield key="i" />, 154], ["Vi-Em - Nada Form...", <Globe key="i" />, 154], ["Convertidor de You...", <Sq key="i" bg="#1d5fa8" t="2c" />, 154],
  ["www.ilo.org/wcmsp...", <Ilo key="i" />, 154], ["www.econ-pol.unisi....", <Globe key="i" />, 154], ["Ingreso Intranet Alu...", <Crest key="i" />, 154],
  ["Library Genesis", <LibGen key="i" />, 117], ["Indicadores del des...", <Ms key="i" />, 154], ["CORREO", <Ms key="i" />, 85],
  ["NRF News | Nationa...", <RMark key="i" c="#e8443a" />, 154], ["Retail Library | Natio...", <RMark key="i" c="#d41f2e" />, 154],
];

const n = { size: 19, sw: 1.800 };
const FolderIcon = () => <Glyph {...n}><path d="M3 6a3 3 0 0 1 3-3h3l2.500 2.500H18a3 3 0 0 1 3 3V18a3 3 0 0 1-3 3H6a3 3 0 0 1-3-3zM3 11h18" /></Glyph>;
const nav = [
  [7, [
    ["Nuevo chat", <Glyph key="i" {...n}><path d="M12 3.500H7A3.500 3.500 0 0 0 3.500 7v10A3.500 3.500 0 0 0 7 20.500h10a3.500 3.500 0 0 0 3.500-3.500v-5M9 15l.5-4 8-8a2 2 0 0 1 3.500 3.500l-8 8z" /></Glyph>],
    ["Buscar chats", <Search key="i" size={19} strokeWidth={1.900} />],
    ["Biblioteca", <Glyph key="i" {...n}><rect x="2.500" y="7" width="14" height="15" rx="3" /><path d="M8 4.500A3 3 0 0 1 11 2l7.500 1A3 3 0 0 1 21 6.500l-1.200 9a3 3 0 0 1-1.300 2M4 20c2-6 5-6 8 0" /><circle cx="11.500" cy="11.500" r="1" /></Glyph>],
  ]],
  [20, [
    ["Codex", <Glyph key="i" {...n}><circle cx="12" cy="12" r="10" /><path d="M8 9l2.500 3.500L8 16M13 15.500h4" /></Glyph>],
    ["Sora", <Glyph key="i" {...n}><circle cx="12" cy="12" r="10" /><path d="M10 8.500v7l5.500-3.500z" fill="#111" /></Glyph>],
    ["GPT", <Glyph key="i" {...n}><circle cx="7" cy="6.500" r="3.300" /><circle cx="17" cy="6.500" r="3.300" /><circle cx="7" cy="17.500" r="3.300" /><circle cx="17" cy="17.500" r="3.300" /></Glyph>],
  ]],
  [20, [
    ["Nuevo proyecto", <Glyph key="i" {...n}><path d="M21 12V8.500a3 3 0 0 0-3-3h-6.500L9 3H6a3 3 0 0 0-3 3v12a3 3 0 0 0 3 3h6M3 11h18M18.500 15v7M15 18.500h7" /></Glyph>],
    ["Programas Estudio Extranje...", <FolderIcon key="i" />], ["Viajes", <FolderIcon key="i" />], ["Códigos R", <FolderIcon key="i" />],
    ["CLAPES (Investigación)", <FolderIcon key="i" />], ["Postulación MPP", <FolderIcon key="i" />], ["Ver más", <Ellipsis key="i" size={19} strokeWidth={2.800} />],
  ]],
];
const chats = ["Metodología IPC-AM PGU", "Sanción por uso celular", "Plantilla inventario seguridad", "Caída IALI en mayo", "Interpretación coeficiente lámi..."];
const draft = `Ayudame a responder esta pregunta sobre un curso de visualización de datos traduciendo mi respuesta a ingles y mejorandola: Think of a time when you encountered a data visualization (e.g., a chart, graph, infographic) that was either particularly effective or ineffective in conveying information. What made it effective or ineffective? Consider clarity, aesthetics, accuracy, and whether it told a compelling story. How could generative AI tools have improved or enhanced this visualization, either in its creation or presentation?

Recientemente me mostraron un trabajo preliminar de un plan de prevención de drogas y alcohol en niños niñas adolescentes y jóvenes de la comuna. Para ello, usaron gráficos`;

function Chrome() {
  return (
    <Monitor $font={segoe} $inset="122px 0 0">
      <ChromeTabs>
        <TabSearch aria-label="Buscar pestañas"><ChevronDown size={13} strokeWidth={2.500} /></TabSearch>
        {browserTabs.map(([t, icon], i) => (
          <BrowserTab key={t} $last={i === 3}>
            {icon}<TabLabel>{t}</TabLabel><X size={13} strokeWidth={2.400} />
            {i < 3 ? <Rule $w={2} $h={16} $c="#fff3c8" $m="0 -8px 0 4px" /> : null}
          </BrowserTab>
        ))}
        <BrowserTab $active>
          <Round $d={16} $bg="#000"><RiOpenaiFill size={11} /></Round>
          <TabLabel>ChatGPT</TabLabel><X size={13} strokeWidth={2.400} />
        </BrowserTab>
        <IconButton $w={40} $color="#8a7431" $h={40} aria-label="Nueva pestaña"><Plus size={14} /></IconButton>
        <Spacer />
        <WindowButtons>
          <IconButton $w={46} $h={30} $color="inherit" aria-label="Minimizar"><Minus size={14} strokeWidth={1.600} /></IconButton>
          <IconButton $w={46} $h={30} $color="inherit" aria-label="Restaurar"><Glyph size={13} sw={1.800}><path d="M4 7h13v14H4zM8 7V3h12v14h-3" /></Glyph></IconButton>
          <IconButton $w={46} $h={30} $color="inherit" aria-label="Cerrar"><X size={15} strokeWidth={1.400} /></IconButton>
        </WindowButtons>
      </ChromeTabs>
      <AddressBar>
        <IconButton $w={36} aria-label="Atrás"><ArrowLeft size={18} /></IconButton>
        <IconButton $w={36} $color="#9a9a9a" aria-label="Adelante"><ArrowRight size={18} /></IconButton>
        <IconButton $w={36} aria-label="Recargar"><RotateCw size={16} strokeWidth={2.400} /></IconButton>
        <Omnibox>
          <SiteInfo><Glyph size={15} sw={2.400}><circle cx="6" cy="6" r="3" /><path d="M13 6h9M2 18h9" /><circle cx="18" cy="18" r="3" /></Glyph></SiteInfo>
          <Url defaultValue="chatgpt.com" aria-label="Dirección" />
          <IconButton $w={40} $h={30} $color="#555" aria-label="Favorito"><Star size={17} /></IconButton>
        </Omnibox>
        <IconButton $w={36} aria-label="Zotero"><svg width="14" height="16" viewBox="0 0 14 16"><path d="M0 0h14v5L7 11h7v5H0v-5l7-6H0z" fill="#5d6b78" /></svg></IconButton>
        <IconButton $w={36} aria-label="Extensiones"><Puzzle size={19} /></IconButton>
        <Rule $w={2} $h={16} $c="#ffe48a" $m="0 8px" />
        <IconButton $w={36} aria-label="Descargas"><Download size={19} strokeWidth={2.400} /></IconButton>
        <IconButton $w={36} aria-label="Perfil"><Round $d={20} $bg="#ee6c0a">G</Round></IconButton>
        <IconButton $w={36} aria-label="Más opciones"><EllipsisVertical size={18} strokeWidth={2.400} /></IconButton>
      </AddressBar>
      <Bookmarks>
        <Glyph size={18} sw={2}><path d="M3 3h6v6H3zM15 3h6v6h-6zM3 15h6v6H3zM15 15h6v6h-6z" /></Glyph>
        <Rule $w={2} $h={16} $c="#ffe07a" $m="0 15px 0 11px" />
        {bookmarks.map(([t, icon, w]) => <Bookmark href="#" key={t} $w={w}>{icon}{t}</Bookmark>)}
        <Spacer />
        <ChevronsRight size={16} />
        <Rule $w={2} $h={16} $c="#ffe07a" $m="0 15px" />
        <Bookmark href="#"><Folder size={18} color="#555" strokeWidth={1.800} />Todos los marcadores</Bookmark>
      </Bookmarks>
      <Page>
        <Side>
          <SideBody>
            <SideHead>
              <RiOpenaiFill size={22} />
              <Glyph size={19} sw={1.500} color="#777"><rect x="2.500" y="3" width="19" height="18" rx="4" /><path d="M9 3v18" /></Glyph>
            </SideHead>
            {nav.map(([mt, items]) => (
              <NavGroup key={items[0][0]} $mt={mt}>
                {items.map(([t, icon]) => <li key={t}><NavLink href="#">{icon}{t}</NavLink></li>)}
              </NavGroup>
            ))}
            <NavGroup $mt={20}>
              <li><NavLink as="span" $muted>Chats</NavLink></li>
              {chats.map((t) => <li key={t}><NavLink href="#">{t}</NavLink></li>)}
            </NavGroup>
            <Plans href="#">
              <PlansIcon><Glyph size={18} sw={2}><path d="M12 1.500l9 5v11l-9 5-9-5v-11z" /><path d="M12 6.500l1.300 4 4 1.500-4 1.500-1.300 4-1.300-4-4-1.500 4-1.500z" fill="#111" stroke="none" /></Glyph></PlansIcon>
              <PlansText>Ver los planes<small>Acceso ilimitado, funciones de<br />equipo y mucho más</small></PlansText>
            </Plans>
          </SideBody>
          <SideScroll><Arrow d="up" /><Thumb $w="9px" $h="445px" /><Spacer /><Arrow d="down" /></SideScroll>
          <SideScroll $row><Arrow d="left" /><Thumb $w="206px" $h="10px" /><Arrow d="right" /></SideScroll>
        </Side>
        <Main>
          <MainHead>
            <ModelButton>ChatGPT <span>4o</span><ChevronDown size={15} color="#8f8f8f" /></ModelButton>
            <Spacer />
            <svg width="18" height="18" viewBox="0 0 18 18"><circle cx="9" cy="9" r="7.500" fill="none" stroke="#111" strokeWidth="1.500" strokeDasharray="3.500 2.200" /><path d="M1.500 16.500v-3l3 3z" fill="#111" /></svg>
            <Rule $w={9} $h={1} $c="transparent" />
            <Avatar>CC<PlanTag>PLUS</PlanTag></Avatar>
          </MainHead>
          <Hero>
            <Question>¿En qué estás trabajando?</Question>
            <Composer>
              <Draft>
                <DraftText defaultValue={draft} aria-label="Mensaje" />
                <DraftScroll><Arrow d="up" /><Thumb $w="6px" $h="196px" /><Arrow d="down" /></DraftScroll>
              </Draft>
              <Actions>
                <Plus size={19} strokeWidth={1.600} />
                <ToolsButton type="button"><Glyph size={18} sw={1.800}><circle cx="16" cy="6" r="3" /><path d="M2 6h10M19 6h3M12 18h10" /><circle cx="8" cy="18" r="3" /><path d="M2 18h2" /></Glyph>Herramientas</ToolsButton>
                <Spacer />
                <IconButton $w={36} type="button" aria-label="Dictar"><Mic size={18} strokeWidth={1.700} /></IconButton>
                <Rule $w={6} $h={1} $c="transparent" />
                <IconButton $w={36} type="button" aria-label="Enviar"><Round $d={36} $bg="#000"><ArrowUp size={20} strokeWidth={2.200} /></Round></IconButton>
              </Actions>
            </Composer>
          </Hero>
        </Main>
      </Page>
      <Bar $small>
        <TaskApp app={apps[0]} small />
        <SearchPill><Search size={17} /><input placeholder="Búsqueda" aria-label="Búsqueda" /></SearchPill>
        {apps.slice(2).map((a) => <TaskApp key={a.id} app={a} small />)}
        <Spacer />
        <Tray>
          <WeatherIcon size={24} />
          <Weather>17°C<span>Parc. soleado</span></Weather>
          <Rule $w={40} $h={1} $c="transparent" />
          <Clock $s={12} $lh={16} $c="#555">18:04<br />09-06-2025</Clock>
        </Tray>
      </Bar>
    </Monitor>
  );
}

export default function App() {
  return (
    <Desktop>
      <GlobalStyle />
      <Acrobat />
      <Chrome />
    </Desktop>
  );
}
